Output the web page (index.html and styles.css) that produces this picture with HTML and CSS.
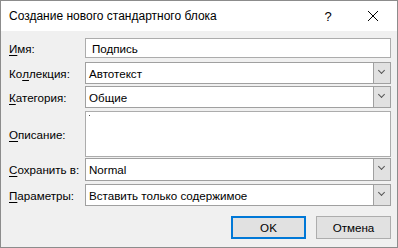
FILE: index.html
```html
<!DOCTYPE html>
<html lang="ru">
<head>
  <meta charset="UTF-8">
  <title>Создание нового стандартного блока</title>
  <link rel="stylesheet" href="styles.css">
</head>
<body>
  <div class="dialog">
    <div class="titlebar">
      <span class="title">Создание нового стандартного блока</span>
      <span class="help">?</span>
      <span class="close">
        <svg viewBox="0 0 10 10" width="10" height="10"><path d="M0 0L10 10M10 0L0 10" stroke="#000" stroke-width="1"/></svg>
      </span>
    </div>

    <div class="content">
      <div class="form">
        <label class="row-label h20 gap4"><u>И</u>мя:</label>
        <div class="field text-field h20 gap4">Подпись</div>

        <label class="row-label h22 gap2">Ко<u>л</u>лекция:</label>
        <div class="field combo h22 gap2"><span class="value">Автотекст</span><span class="drop"></span></div>

        <label class="row-label h22 gap3"><u>К</u>атегория:</label>
        <div class="field combo h22 gap3"><span class="value">Общие</span><span class="drop"></span></div>

        <label class="row-label h46 gap1"><u>О</u>писание:</label>
        <div class="field textarea h46 gap1"><span class="caret"></span></div>

        <label class="row-label h23 gap3"><u>С</u>охранить в:</label>
        <div class="field combo h23 gap3"><span class="value">Normal</span><span class="drop"></span></div>

        <label class="row-label h22"><u>П</u>араметры:</label>
        <div class="field combo h22"><span class="value">Вставить только содержимое</span><span class="drop"></span></div>
      </div>

      <div class="buttons">
        <button class="btn btn-default">OK</button>
        <button class="btn">Отмена</button>
      </div>
    </div>
  </div>
</body>
</html>
```

FILE: styles.css
```css
* {
  margin: 0;
  padding: 0;
  box-sizing: border-box;
}

body {
  font-family: "Liberation Sans", Arial, sans-serif;
  font-size: 12px;
  color: #000;
  background: #f0f0f0;
}

.dialog {
  width: 398px;
  height: 248px;
  border: 1px solid #8c8c8c;
  background: #f0f0f0;
  display: flex;
  flex-direction: column;
}

.titlebar {
  height: 30px;
  background: #fff;
  display: flex;
  align-items: center;
  padding-left: 8px;
}

.title {
  flex: 1;
  font-size: 12px;
}

.help {
  width: 46px;
  text-align: center;
  font-size: 13px;
}

.close {
  width: 46px;
  display: flex;
  justify-content: center;
  padding-right: 2px;
}

.content {
  flex: 1;
  padding: 7px 6px 0 8px;
}

.form {
  display: grid;
  grid-template-columns: 76px 1fr;
  align-items: start;
  font-size: 11.6px;
}

.row-label {
  white-space: nowrap;
  display: flex;
  align-items: center;
}

.row-label u {
  text-decoration-thickness: 1px;
  text-underline-offset: 2px;
}

.field {
  background: #fff;
  border: 1px solid #acacac;
  display: flex;
  align-items: center;
}

.h20 { height: 20px; }
.h22 { height: 22px; }
.h23 { height: 23px; }
.h46 { height: 46px; }

.gap1 { margin-bottom: 1px; }
.gap2 { margin-bottom: 2px; }
.gap3 { margin-bottom: 3px; }
.gap4 { margin-bottom: 4px; }

.text-field {
  padding-left: 6px;
}

.combo {
  border-color: #a0a0a0;
  padding-left: 3px;
}

.combo .value {
  flex: 1;
}

.drop {
  width: 17px;
  align-self: stretch;
  background: #e1e1e1;
  border-left: 1px solid #a0a0a0;
  position: relative;
}

.drop::after {
  content: "";
  position: absolute;
  left: 5px;
  top: 5px;
  width: 4px;
  height: 4px;
  border-right: 1px solid #555;
  border-bottom: 1px solid #555;
  transform: rotate(45deg);
}

.textarea {
  align-items: flex-start;
  padding: 3px 0 0 3px;
}

.caret {
  width: 1px;
  height: 1px;
  background: #555;
}

.buttons {
  display: flex;
  justify-content: flex-end;
  gap: 10px;
  margin-top: 10px;
}

.btn {
  width: 75px;
  height: 23px;
  font-family: inherit;
  font-size: 11.6px;
  color: #000;
  background: #e1e1e1;
  border: 1px solid #adadad;
}

.btn-default {
  border: 2px solid #0078d7;
}
```
